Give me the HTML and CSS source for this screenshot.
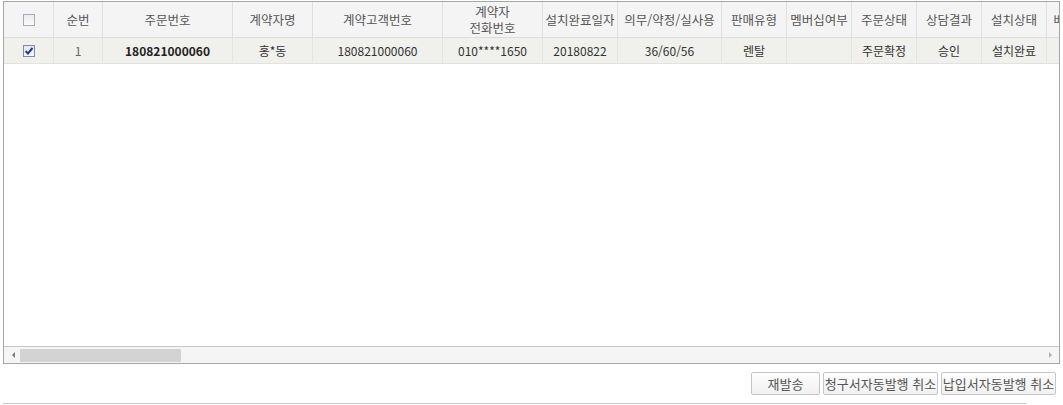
FILE: index.html
```html
<!DOCTYPE html>
<html lang="ko">
<head>
    <meta charset="UTF-8">
    <title>주문 목록</title>
    <link rel="stylesheet" href="styles.css">
</head>
<body>
    <div class="grid">
        <div class="grid-body">
            <table>
                <thead>
                    <tr>
                        <th class="c-chk"><span class="chk"></span></th>
                        <th class="c-no">순번</th>
                        <th class="c-order">주문번호</th>
                        <th class="c-name">계약자명</th>
                        <th class="c-cust">계약고객번호</th>
                        <th class="c-tel">계약자<br>전화번호</th>
                        <th class="c-date">설치완료일자</th>
                        <th class="c-term">의무/약정/실사용</th>
                        <th class="c-s">판매유형</th>
                        <th class="c-s">멤버십여부</th>
                        <th class="c-s">주문상태</th>
                        <th class="c-s">상담결과</th>
                        <th class="c-s">설치상태</th>
                        <th class="c-ship">배송상태</th>
                        <th class="c-s">비고</th>
                    </tr>
                </thead>
                <tbody>
                    <tr class="selected">
                        <td><span class="chk checked"><svg width="10" height="10" viewBox="0 0 10 10"><path d="M1.5 5 L4 7.5 L8.5 2" fill="none" stroke="#1f3f8a" stroke-width="2"/></svg></span></td>
                        <td class="light">1</td>
                        <td class="bold">180821000060</td>
                        <td>홍*동</td>
                        <td>180821000060</td>
                        <td>010****1650</td>
                        <td>20180822</td>
                        <td>36/60/56</td>
                        <td>렌탈</td>
                        <td></td>
                        <td>주문확정</td>
                        <td>승인</td>
                        <td>설치완료</td>
                        <td></td>
                        <td></td>
                    </tr>
                </tbody>
            </table>
        </div>
        <div class="hscroll">
            <span class="arrow left"></span>
            <div class="track"><div class="thumb"></div></div>
            <span class="arrow right"></span>
        </div>
    </div>
    <div class="buttons">
        <button class="btn short">재발송</button>
        <button class="btn">청구서자동발행 취소</button>
        <button class="btn">납입서자동발행 취소</button>
    </div>
    <div class="divider"></div>
</body>
</html>
```

FILE: styles.css
```css
body {
    margin: 0;
    background-color: #fff;
    font-family: "Noto Sans CJK KR", sans-serif;
    font-size: 12px;
    color: #333;
}
.grid {
    box-sizing: border-box;
    width: 1057px;
    margin: 1px 0 0 3px;
    border: 1px solid #a6a6a6;
}
.grid-body {
    height: 344px;
    overflow: hidden;
}
table {
    border-collapse: separate;
    border-spacing: 0;
    table-layout: fixed;
    width: 1120px;
}
th, td {
    box-sizing: border-box;
    padding: 0;
    text-align: center;
    white-space: nowrap;
    overflow: hidden;
    border-right: 1px solid #e0e0e0;
    border-bottom: 1px solid #dcdcdc;
}
th {
    height: 36px;
    background-color: #f4f4f4;
    color: #555;
    font-size: 12.5px;
    font-weight: normal;
    line-height: 16px;
}
td {
    height: 26px;
    line-height: 14px;
}
.selected td {
    background-color: #f0f0ec;
    border-right-color: #e4e4e0;
    border-bottom-color: #e2e2e2;
}
.bold {
    font-weight: bold;
    color: #222;
}
.light {
    color: #666;
}
.c-chk { width: 50px; }
.c-no { width: 49px; }
.c-order { width: 130px; }
.c-name { width: 80px; }
.c-cust { width: 130px; }
.c-tel { width: 100px; }
.c-date { width: 75px; }
.c-term { width: 104px; }
.c-s { width: 65px; }
.c-ship { width: 60px; }
.chk {
    box-sizing: border-box;
    display: inline-block;
    width: 12px;
    height: 12px;
    border: 1px solid #a3aab8;
    background: linear-gradient(#ebebeb, #fafafa);
    vertical-align: middle;
    position: relative;
    top: -1px;
}
.chk.checked {
    border-color: #7d8ba6;
    background: linear-gradient(#e4e7ee, #f8f9fb);
}
.chk svg {
    display: block;
}
.hscroll {
    display: flex;
    align-items: stretch;
    height: 16px;
    border-top: 1px solid #c8c8c8;
    background-color: #f5f5f5;
}
.arrow {
    width: 16px;
    position: relative;
}
.arrow::after {
    content: "";
    position: absolute;
    top: 5px;
    border-top: 3px solid transparent;
    border-bottom: 3px solid transparent;
}
.arrow.left::after {
    left: 8px;
    border-right: 3px solid #7a7a7a;
}
.arrow.right::after {
    left: 6px;
    border-left: 3px solid #b0b0b0;
}
.track {
    flex: 1;
    padding-top: 2px;
}
.thumb {
    width: 161px;
    height: 13px;
    background-color: #d3d3d3;
}
.buttons {
    display: flex;
    justify-content: flex-end;
    gap: 3px;
    width: 1059px;
    margin: 8px 0 0 0;
    padding-right: 3px;
    box-sizing: border-box;
}
.btn {
    width: 115px;
    height: 23px;
    padding: 0;
    font-family: "Noto Sans CJK KR", sans-serif;
    font-size: 13px;
    color: #555;
    background: linear-gradient(#fdfdfd, #f1f1f1);
    border: 1px solid #c6c6c6;
    border-radius: 2px;
    line-height: 19px;
    white-space: nowrap;
}
.btn.short {
    width: 69px;
}
.divider {
    width: 1023px;
    margin: 8px 0 0 3px;
    border-top: 1px solid #c8c8c8;
}
```
